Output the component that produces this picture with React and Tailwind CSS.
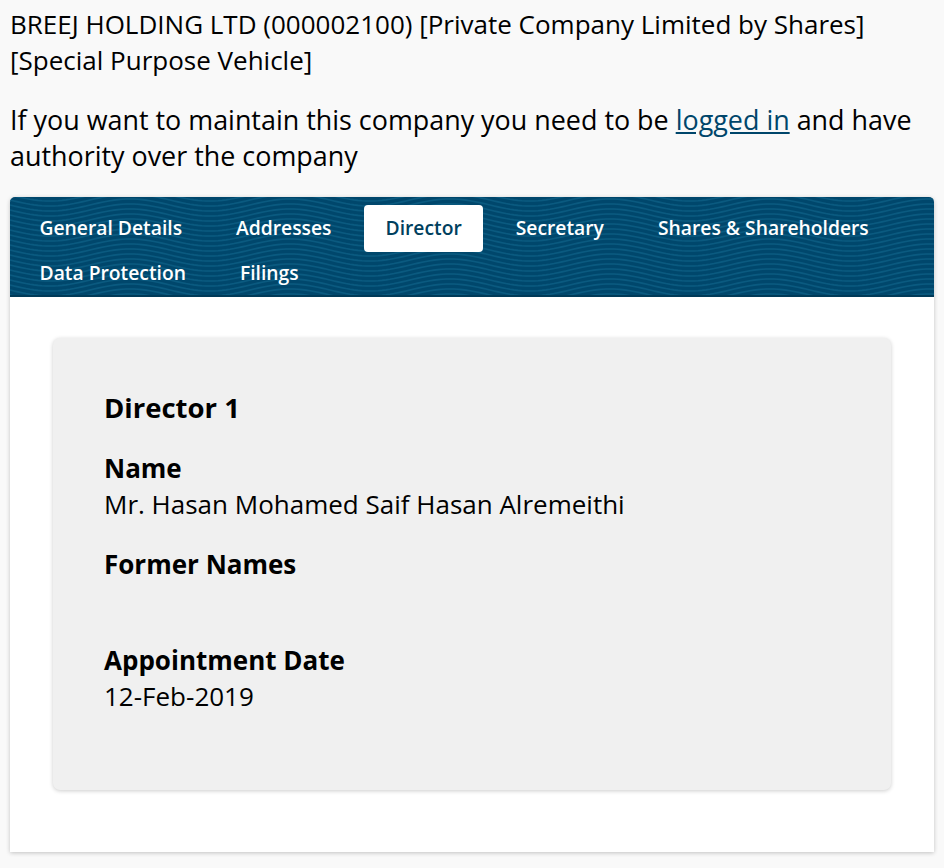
import React from "react";

const font = { fontFamily: '"Open Sans", "Noto Sans", sans-serif' };

function Waves() {
  const lines = [];
  for (let y0 = -12; y0 <= 52; y0 += 5) {
    let d = "";
    for (let x = 0; x <= 160; x += 4) {
      const y = y0 + 6 * Math.sin((2 * Math.PI * x) / 160);
      d += (x === 0 ? "M" : "L") + x + " " + y.toFixed(2) + " ";
    }
    lines.push(<path key={y0} d={d} fill="none" stroke="#0a5a80" strokeWidth="1.6" />);
  }
  return (
    <svg className="absolute inset-0 w-full h-full" aria-hidden="true">
      <defs>
        <pattern id="waves" width="160" height="40" patternUnits="userSpaceOnUse">
          {lines}
        </pattern>
      </defs>
      <rect width="100%" height="100%" fill="url(#waves)" />
    </svg>
  );
}

const tabsRow1 = ["General Details", "Addresses", "Director", "Secretary", "Shares & Shareholders"];
const tabsRow2 = ["Data Protection", "Filings"];

function Tab({ label }) {
  const active = label === "Director";
  return (
    <div
      className={
        "h-[47px] px-[21.5px] flex items-center text-[19.3px] font-semibold rounded-[4px] " +
        (active ? "bg-white text-[#00405e]" : "text-white")
      }
    >
      {label}
    </div>
  );
}

function Field({ label, value }) {
  return (
    <div className="mb-[24px]">
      <div className="text-[26px] leading-[36px] font-bold text-black">{label}</div>
      <div className="text-[26px] leading-[36px] text-black min-h-[36px]">{value}</div>
    </div>
  );
}

export default function App() {
  return (
    <div className="min-h-[868px] bg-[#f9f9f9] px-[10px] pt-[6px] pb-[16px]" style={font}>
      <h1 className="text-[26px] leading-[36px] text-black font-normal">
        BREEJ HOLDING LTD (000002100) [Private Company Limited by Shares] [Special Purpose Vehicle]
      </h1>
      <p className="mt-[24px] text-[26.9px] leading-[36px] text-black">
        If you want to maintain this company you need to be{" "}
        <a href="#" className="underline text-[#00466b]">logged in</a> and have authority over the company
      </p>
      <div className="mt-[23px] shadow-[0_1px_4px_rgba(0,0,0,0.22)] rounded-t-[5px]">
        <div className="relative h-[100px] bg-[#00476c] rounded-t-[5px] overflow-hidden border-b-2 border-[#003a58]">
          <Waves />
          <div className="relative px-[8px] pt-[8px]">
            <div className="flex gap-[11px]">
              {tabsRow1.map((t) => (
                <Tab key={t} label={t} />
              ))}
            </div>
            <div className="flex gap-[11px] mt-[-2px]">
              {tabsRow2.map((t) => (
                <Tab key={t} label={t} />
              ))}
            </div>
          </div>
        </div>
        <div className="bg-white px-[43px] pt-[41px] pb-[62px]">
          <div className="bg-[#f0f0f0] rounded-[7px] shadow-[0_1px_4px_rgba(0,0,0,0.2)] pl-[51px] pr-[52px] pt-[52px] pb-[52px]">
            <h2 className="text-[27.5px] leading-[36px] font-bold text-black mb-[24px]">Director 1</h2>
            <Field label="Name" value="Mr. Hasan Mohamed Saif Hasan Alremeithi" />
            <Field label="Former Names" value="" />
            <Field label="Appointment Date" value="12-Feb-2019" />
          </div>
        </div>
      </div>
    </div>
  );
}
